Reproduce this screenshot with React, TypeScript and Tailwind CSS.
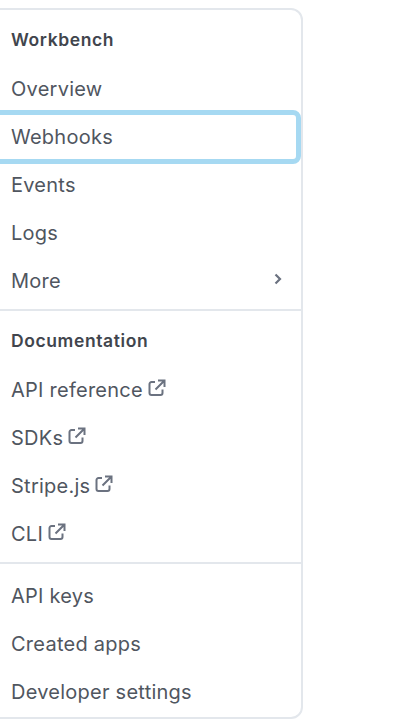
const font = "font-['Inter','Liberation_Sans',sans-serif]"

function ExternalIcon() {
  return (
    <svg width="20" height="20" viewBox="0 0 20 20" fill="none" stroke="#6b7280" strokeWidth="2" className="mb-1 ml-1">
      <path d="M8 4H4.500A2 2 0 0 0 2.500 6v9a2 2 0 0 0 2 2h9a2 2 0 0 0 2-2v-3.500" />
      <path d="M8.500 11.500 17 3M11 2.500H17.500V9" />
    </svg>
  )
}

function Row({ label, external }: { label: string; external?: boolean }) {
  return (
    <div className="h-12 pl-[9px] flex items-center text-[20px] tracking-[0.25px] text-[#50565f]">
      <span>{label}</span>
      {external && <ExternalIcon />}
    </div>
  )
}

function Heading({ label }: { label: string }) {
  return <div className="h-12 pl-[9px] pb-[2px] flex items-center text-[17.5px] tracking-[0.6px] font-semibold text-[#41454d]">{label}</div>
}

export default function App() {
  return (
    <div className={`h-[720px] w-[420px] overflow-hidden bg-white pt-2 ${font}`}>
      <div className="ml-[-12px] w-[315px] h-[711px] rounded-[12px] border-2 border-[#e3e7ec] bg-white pt-[7px] pl-[12px]">
        <Heading label="Workbench" />
        <Row label="Overview" />
        <div className="relative ml-[-12px] pl-[12px]">
          <Row label="Webhooks" />
          <div className="absolute inset-x-0 -inset-y-[3px] rounded-[8px] border-[5px] border-[#a6d9f2] blur-[0.5px]" />
        </div>
        <Row label="Events" />
        <Row label="Logs" />
        <div className="flex items-center justify-between pr-[17px]">
          <Row label="More" />
          <svg width="12" height="12" viewBox="0 0 12 12" fill="none" stroke="#6b7280" strokeWidth="2.200" className="mb-1">
            <path d="M3.500 1.500 8 6l-4.500 4.500" />
          </svg>
        </div>
        <div className="mt-1 mb-[7px] ml-[-12px] h-[2px] bg-[#e3e7ec]" />
        <Heading label="Documentation" />
        <Row label="API reference" external />
        <Row label="SDKs" external />
        <Row label="Stripe.js" external />
        <Row label="CLI" external />
        <div className="mt-1 mb-2 ml-[-12px] h-[2px] bg-[#e3e7ec]" />
        <Row label="API keys" />
        <Row label="Created apps" />
        <Row label="Developer settings" />
      </div>
    </div>
  )
}
